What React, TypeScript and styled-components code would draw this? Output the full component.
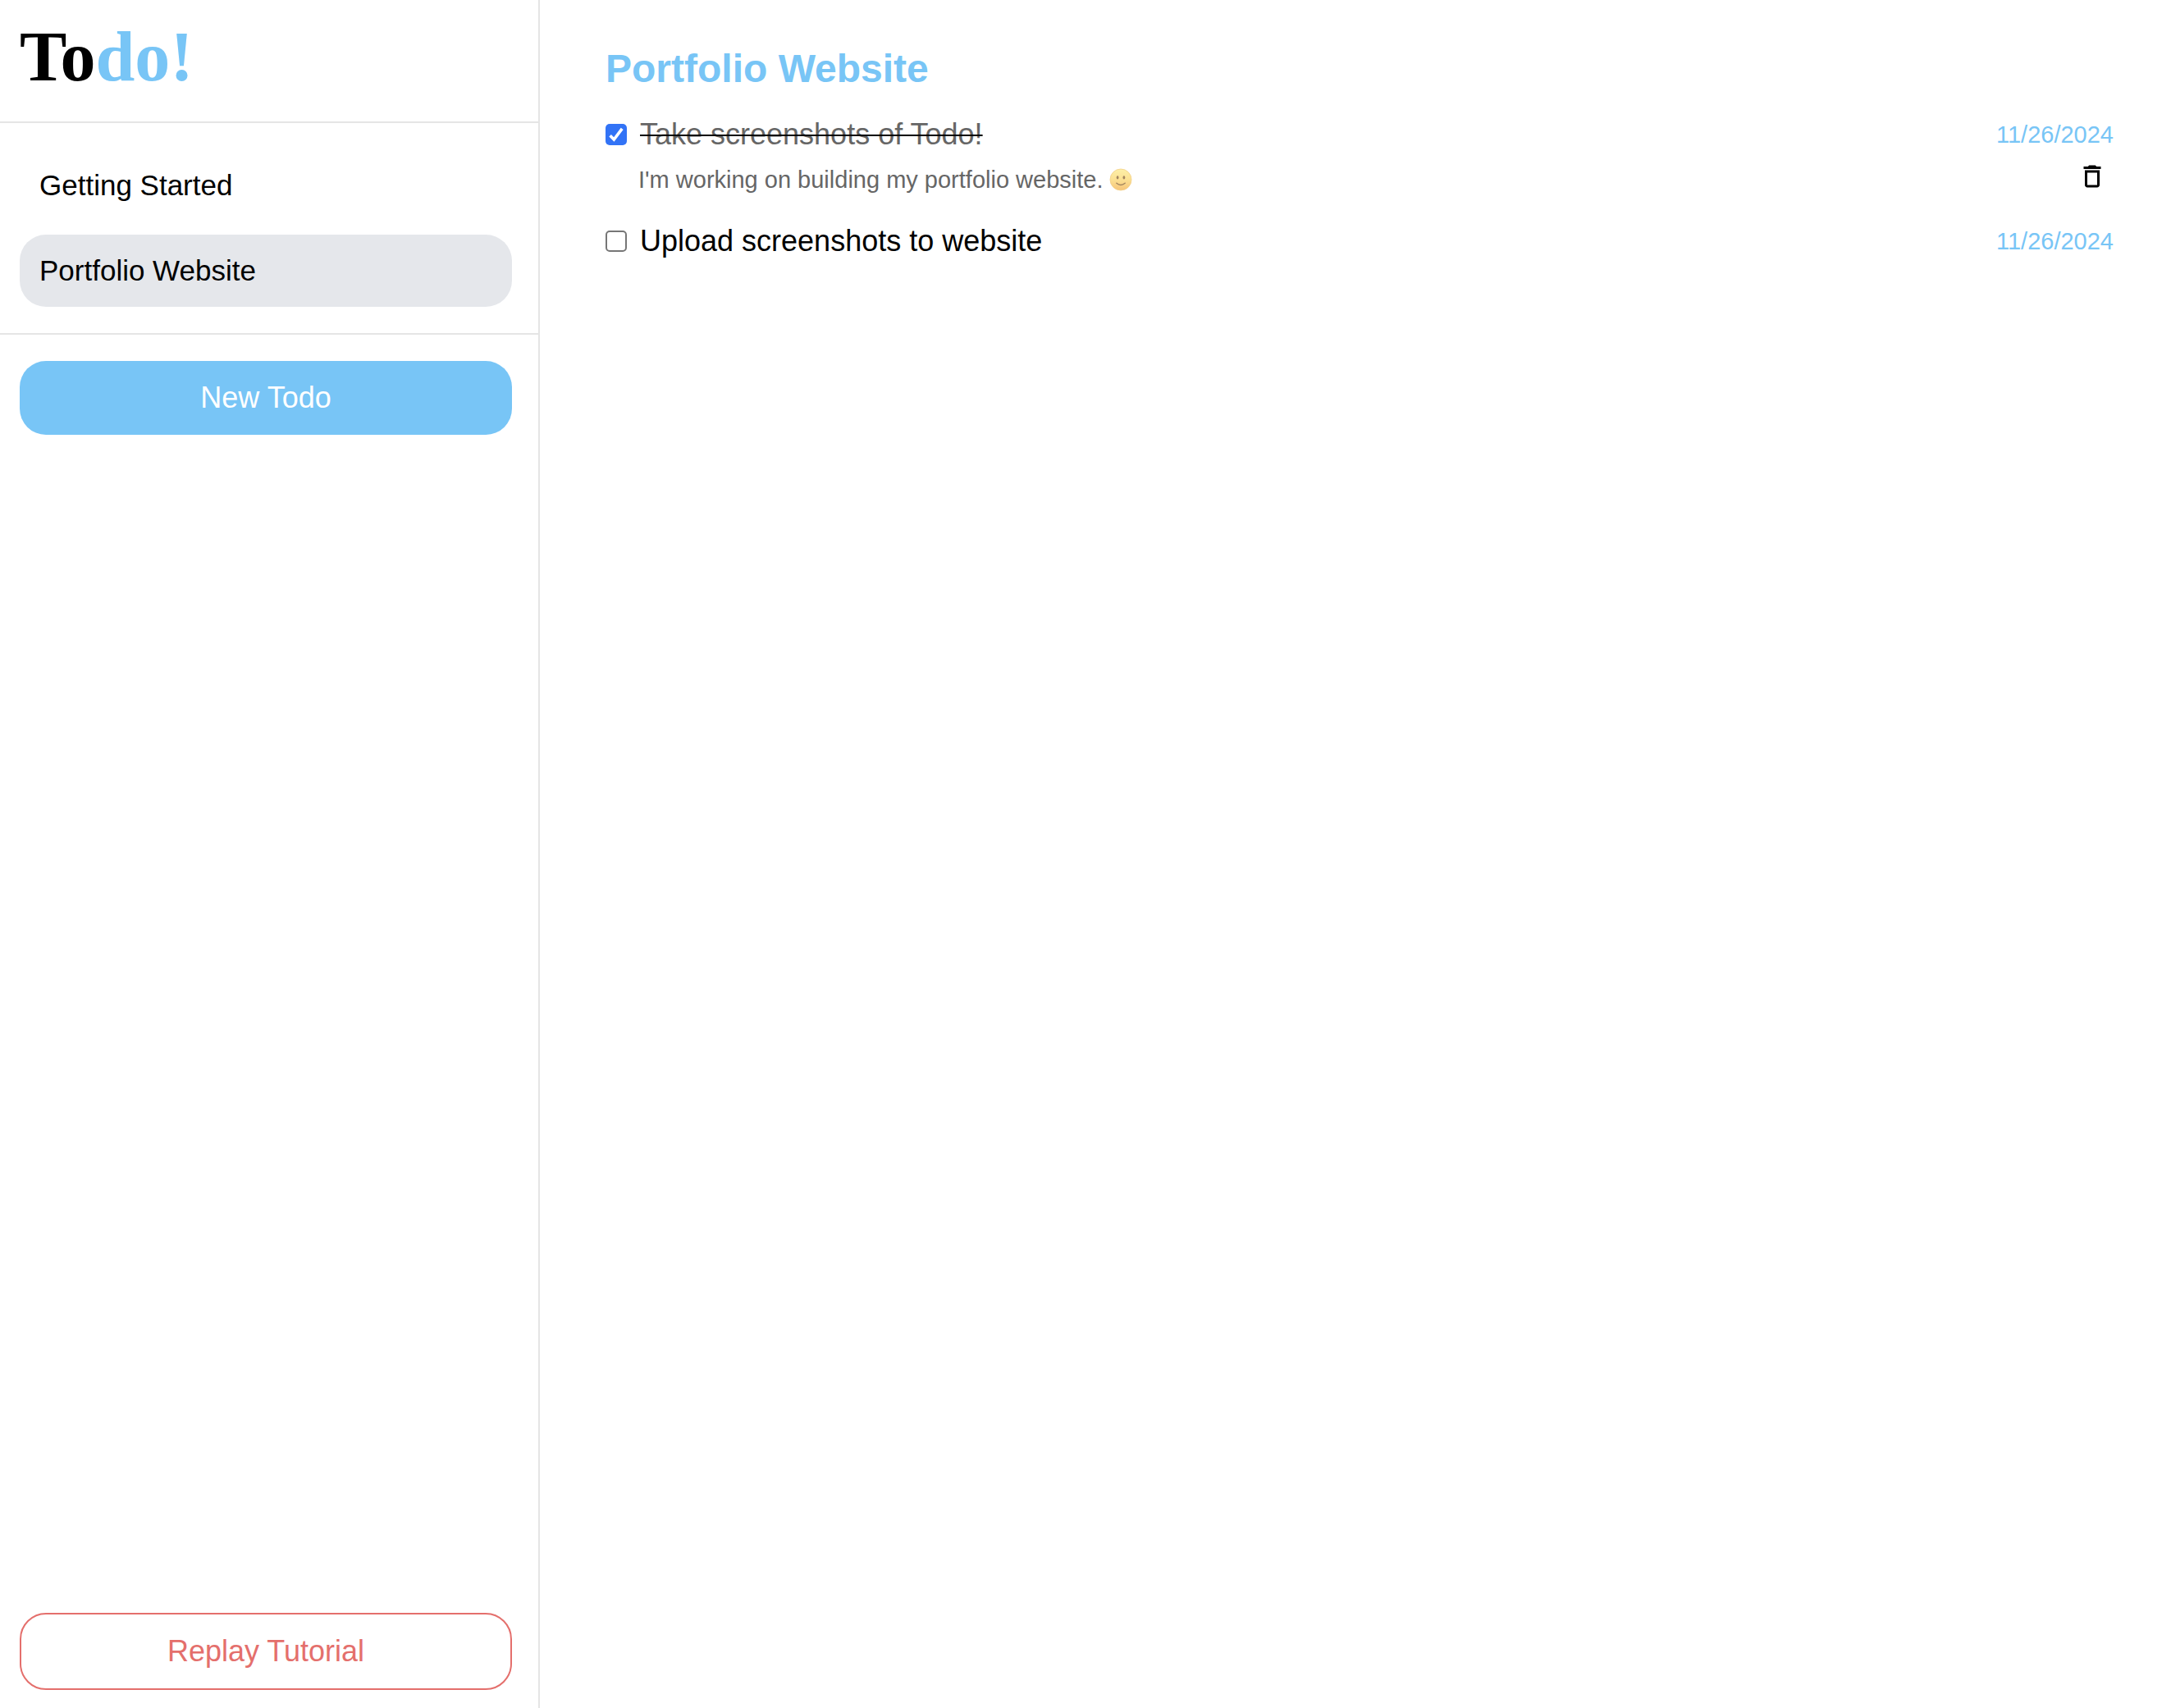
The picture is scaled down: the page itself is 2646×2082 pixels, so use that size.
import React, { useState } from "react";
import styled, { createGlobalStyle } from "styled-components";
import { MdDeleteOutline } from "react-icons/md";

const blue = "#78c5f6";
const red = "#e46f6c";
const line = "#e5e5e5";

const GlobalStyle = createGlobalStyle`
  *, *::before, *::after { box-sizing: border-box; }
  body {
    margin: 0;
    background: #fff;
    color: #000;
    font-family: "Liberation Sans", Arial, Helvetica, sans-serif;
    font-size: 36px;
    line-height: 44px;
  }
`;

const Layout = styled.div`
  display: flex;
  min-height: 100vh;
`;

const Sidebar = styled.aside`
  display: flex;
  flex-direction: column;
  flex: 0 0 658px;
  border-right: 2px solid ${line};
`;

const Header = styled.header`
  padding: 24px 24px 34px;
  border-bottom: 2px solid ${line};
`;

const Logo = styled.h1`
  margin: 0;
  font-family: "Liberation Serif", "Times New Roman", serif;
  font-size: 86px;
  font-weight: 700;
  line-height: 90px;
`;

const Accent = styled.span`
  color: ${blue};
`;

const ProjectNav = styled.nav`
  display: flex;
  flex-direction: column;
  gap: 16px;
  padding: 32px 32px 32px 24px;
  border-bottom: 2px solid ${line};
`;

const Pill = styled.button`
  width: 100%;
  border: 0;
  border-radius: 32px;
  background: transparent;
  color: inherit;
  font: inherit;
  cursor: pointer;
`;

const ProjectButton = styled(Pill)<{ $active: boolean }>`
  padding: 22px 24px;
  background: ${(p) => (p.$active ? "#e5e7eb" : "transparent")};
  font-size: 35px;
  text-align: left;
`;

const PrimaryButton = styled(Pill)`
  padding: 23px 24px;
  background: ${blue};
  color: #fff;
`;

const OutlineButton = styled(Pill)`
  padding: 23px 24px;
  border: 2px solid ${red};
  color: ${red};
`;

const Actions = styled.div`
  padding: 32px 32px 32px 24px;
`;

const SidebarFooter = styled.footer`
  margin-top: auto;
  padding: 22px 32px 22px 24px;
`;

const Main = styled.main`
  flex: 1;
  min-width: 0;
  padding: 56px 70px 56px 80px;
`;

const Title = styled.h2`
  margin: 0 0 30px;
  color: ${blue};
  font-size: 48px;
  font-weight: 700;
  line-height: 56px;
`;

const TodoList = styled.ul`
  display: flex;
  flex-direction: column;
  gap: 32px;
  margin: 0;
  padding: 0;
  list-style: none;
`;

const TodoRow = styled.div`
  display: flex;
  align-items: center;
  justify-content: space-between;
`;

const TodoLabel = styled.label<{ $done: boolean }>`
  display: flex;
  align-items: center;
  gap: 16px;
  color: ${(p) => (p.$done ? "#666" : "#000")};

  span {
    text-decoration: ${(p) => (p.$done ? "line-through #000 2px" : "none")};
  }
`;

const Checkbox = styled.input`
  width: 26px;
  height: 26px;
  margin: 0;
  appearance: none;
  border: 2px solid #767676;
  border-radius: 5px;
  background: #fff;

  &:checked {
    border: 0;
    background: #3273f6
      url("data:image/svg+xml,%3Csvg xmlns='http://www.w3.org/2000/svg' viewBox='0 0 26 26'%3E%3Cpath d='M5.6 14.2 10.3 19 20.2 5.8' fill='none' stroke='white' stroke-width='3.6'/%3E%3C/svg%3E")
      center / 100%;
  }
`;

const DueDate = styled.time`
  color: ${blue};
  font-size: 29px;
`;

const Details = styled.div`
  display: flex;
  align-items: flex-start;
  justify-content: space-between;
  min-height: 43px;
  margin-top: 11px;
  padding: 0 8px 0 40px;
`;

const Note = styled.p`
  display: flex;
  align-items: center;
  gap: 8px;
  margin: 0;
  padding-top: 6px;
  color: #666;
  font-size: 29px;
  line-height: 32px;
`;

const Smile = styled.svg`
  width: 28px;
  height: 28px;
`;

const IconButton = styled.button`
  display: flex;
  padding: 0;
  border: 0;
  background: none;
  color: #000;
  cursor: pointer;
`;

function SmileIcon() {
  return (
    <Smile viewBox="0 0 28 28" role="img" aria-label="Slightly smiling face">
      <defs>
        <linearGradient id="face" x1="0" y1="0" x2="0" y2="1">
          <stop offset="0" stopColor="#fdf0a8" />
          <stop offset="0.5" stopColor="#fbe092" />
          <stop offset="1" stopColor="#f6c479" />
        </linearGradient>
      </defs>
      <circle cx="14" cy="14" r="13" fill="url(#face)" stroke="#f3cf86" strokeWidth="0.8" />
      <ellipse cx="10.1" cy="11.4" rx="1.4" ry="2.1" fill="#a3865f" />
      <ellipse cx="17.9" cy="11.4" rx="1.4" ry="2.1" fill="#a3865f" />
      <path d="M8.8 18.2q5.2 4.4 10.4 0" fill="none" stroke="#a3865f" strokeWidth="1.4" strokeLinecap="round" />
    </Smile>
  );
}

type Todo = { id: string; text: string; due: string; iso: string; note?: string };

const projects = ["Getting Started", "Portfolio Website"];

const todos: Todo[] = [
  {
    id: "take",
    text: "Take screenshots of Todo!",
    due: "11/26/2024",
    iso: "2024-11-26",
    note: "I'm working on building my portfolio website.",
  },
  { id: "upload", text: "Upload screenshots to website", due: "11/26/2024", iso: "2024-11-26" },
];

export default function App() {
  const [active, setActive] = useState("Portfolio Website");
  const [done, setDone] = useState<Record<string, boolean>>({ take: true });

  return (
    <>
      <GlobalStyle />
      <Layout>
        <Sidebar>
          <Header>
            <Logo>
              To<Accent>do!</Accent>
            </Logo>
          </Header>
          <ProjectNav>
            {projects.map((name) => (
              <ProjectButton key={name} type="button" $active={name === active} onClick={() => setActive(name)}>
                {name}
              </ProjectButton>
            ))}
          </ProjectNav>
          <Actions>
            <PrimaryButton type="button">New Todo</PrimaryButton>
          </Actions>
          <SidebarFooter>
            <OutlineButton type="button">Replay Tutorial</OutlineButton>
          </SidebarFooter>
        </Sidebar>
        <Main>
          <Title>Portfolio Website</Title>
          <TodoList>
            {todos.map((todo) => (
              <li key={todo.id}>
                <TodoRow>
                  <TodoLabel htmlFor={todo.id} $done={!!done[todo.id]}>
                    <Checkbox
                      id={todo.id}
                      type="checkbox"
                      checked={!!done[todo.id]}
                      onChange={(e) => setDone({ ...done, [todo.id]: e.target.checked })}
                    />
                    <span>{todo.text}</span>
                  </TodoLabel>
                  <DueDate dateTime={todo.iso}>{todo.due}</DueDate>
                </TodoRow>
                {todo.note && (
                  <Details>
                    <Note>
                      {todo.note}
                      <SmileIcon />
                    </Note>
                    <IconButton type="button" aria-label="Delete todo">
                      <MdDeleteOutline size={36} />
                    </IconButton>
                  </Details>
                )}
              </li>
            ))}
          </TodoList>
        </Main>
      </Layout>
    </>
  );
}
